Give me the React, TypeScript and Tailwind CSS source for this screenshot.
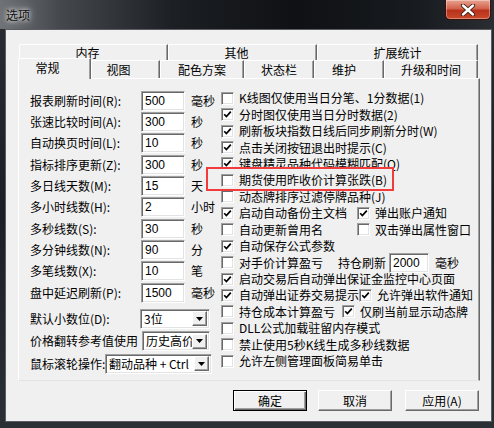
import React from "react"

const Box = ({ on }: { on?: boolean }) => (
  <span className="w-[13px] h-[13px] shrink-0 bg-white border border-t-[#a0a0a0] border-l-[#a0a0a0] border-r-white border-b-white shadow-[inset_1px_1px_0_#696969,inset_-1px_-1px_0_#e3e3e3] flex items-center justify-center">
    {on && (
      <svg width="9" height="9" viewBox="0 0 9 9">
        <path d="M1.2 4.2 L3.4 6.6 L7.8 1.6" fill="none" stroke="#000" strokeWidth="1.7" />
      </svg>
    )}
  </span>
)

const Check = ({ on, text, className = "" }: { on?: boolean; text: string; className?: string }) => (
  <div className={`flex items-center gap-[5px] whitespace-nowrap ${className}`}>
    <Box on={on} />
    <span>{text}</span>
  </div>
)

const Input = ({ value, className = "w-[44px]" }: { value: string; className?: string }) => (
  <div className={`h-[20px] shrink-0 bg-white border border-t-[#a0a0a0] border-l-[#a0a0a0] border-r-white border-b-white shadow-[inset_1px_1px_0_#696969,inset_-1px_-1px_0_#e3e3e3] pl-[3px] flex items-center font-['Liberation_Sans'] text-[12px] ${className}`}>
    {value}
  </div>
)

const Field = ({ label, value, unit }: { label: string; value: string; unit: string }) => (
  <div className="h-[21.33px] flex items-center">
    <span className="w-[111px] whitespace-nowrap">{label}</span>
    <Input value={value} />
    <span className="ml-[6px] whitespace-nowrap">{unit}</span>
  </div>
)

const Select = ({ value, className }: { value: string; className: string }) => (
  <div className={`h-[20px] shrink-0 bg-white border border-t-[#a0a0a0] border-l-[#a0a0a0] border-r-white border-b-white shadow-[inset_1px_1px_0_#696969,inset_-1px_-1px_0_#e3e3e3] flex items-center pl-[3px] pr-[2px] ${className}`}>
    <span className="flex-1 min-w-0 whitespace-nowrap overflow-x-clip">{value}</span>
    <span className="w-[15px] h-[15px] shrink-0 bg-[#f0f0f0] border border-t-white border-l-white border-r-[#696969] border-b-[#696969] shadow-[inset_-1px_-1px_0_#a0a0a0] flex items-center justify-center">
      <svg width="7" height="4" viewBox="0 0 7 4">
        <path d="M0 0 H7 L3.5 4 Z" fill="#000" />
      </svg>
    </span>
  </div>
)

const Button = ({ text, main, className = "" }: { text: string; main?: boolean; className?: string }) => (
  <div className={`w-[74px] h-[21px] bg-[#f0f0f0] flex items-center justify-center border ${main ? "border-black shadow-[inset_1px_1px_0_#fff,inset_-1px_-1px_0_#696969,inset_-2px_-2px_0_#a0a0a0]" : "border-t-white border-l-white border-r-[#696969] border-b-[#696969] shadow-[inset_-1px_-1px_0_#a0a0a0]"} ${className}`}>
    {text}
  </div>
)

const BackTab = ({ text, className }: { text: string; className: string }) => (
  <div className={`h-[16px] flex items-center justify-center border-t border-l border-t-white border-l-white border-r border-r-[#696969] shadow-[inset_-1px_0_0_#a0a0a0] rounded-tl-[2px] ${className}`}>
    {text}
  </div>
)

const FrontTab = ({ text, className, active }: { text: string; className: string; active?: boolean }) => (
  <div className={`flex items-center justify-center bg-[#f0f0f0] border-t border-l border-t-white border-l-white border-r border-r-[#696969] shadow-[inset_-1px_0_0_#a0a0a0] rounded-tl-[2px] ${active ? "h-[21px] pb-[3px]" : "h-[18px] mb-[1px] pt-[1px]"} ${className}`}>
    {text}
  </div>
)

export default function App() {
  return (
    <div className="w-[494px] h-[428px] overflow-hidden bg-[linear-gradient(180deg,#2a2e33_0%,#1b1f24_50%,#2b3035_100%)] font-['Noto_Sans_CJK_SC',sans-serif] text-[12px] leading-[16px] text-black">
      {/* title bar */}
      <div className="h-[29px] flex items-start justify-between bg-[linear-gradient(90deg,#6f7276_0%,#45484c_12%,#1c1f23_35%,#0f1114_60%,#181b1f_85%,#2a2d31_100%)]">
        <span className="mt-[7px] ml-[6px] text-[#111] [text-shadow:0_0_4px_#fff,0_0_8px_#ddd]">选项</span>
        <div className="mr-[3px] w-[46px] h-[20px] rounded-b-[5px] border border-t-0 border-[#3b0f0a] bg-[linear-gradient(180deg,#e8a393_0%,#d4624a_45%,#b8321c_55%,#c9482a_100%)] shadow-[inset_0_0_0_1px_rgba(255,255,255,0.35)] flex items-center justify-center">
          <svg width="16" height="12" viewBox="0 0 16 12">
            <path d="M3 1.5 L13 10.5 M13 1.5 L3 10.5" stroke="#3a1a12" strokeWidth="4.2" strokeLinecap="round" />
            <path d="M3 1.5 L13 10.5 M13 1.5 L3 10.5" stroke="#fff" strokeWidth="2.4" strokeLinecap="round" />
          </svg>
        </div>
      </div>

      {/* client area */}
      <div className="ml-[5px] w-[487px] h-[393px] border border-[#5a5e63] bg-[#f0f0f0] pl-[12px] pt-[14px]">
        {/* tabs */}
        <div className="flex ml-[1px] w-[459px]">
          <BackTab text="内存" className="w-[149px] pr-[12px]" />
          <BackTab text="其他" className="w-[149px] pr-[12px]" />
          <BackTab text="扩展统计" className="w-[161px]" />
        </div>
        <div className="relative z-10 -mt-[2px] -mb-[1px] h-[21px] flex items-end w-[460px]">
          <FrontTab text="常规" active className="w-[73px] pr-[14px]" />
          <FrontTab text="视图" className="w-[69px] pr-[14px]" />
          <FrontTab text="配色方案" className="w-[84px]" />
          <FrontTab text="状态栏" className="w-[70px]" />
          <FrontTab text="维护" className="w-[70px] pr-[10px]" />
          <FrontTab text="升级和时间" className="w-[94px]" />
        </div>

        {/* panel */}
        <div className="w-[462px] h-[303px] border border-t-white border-l-white border-r-[#696969] border-b-[#e3e3e3] shadow-[inset_-1px_0_0_#a0a0a0] flex pt-[11px] pl-[11px]">
          {/* left column */}
          <div className="w-[191px] flex flex-col">
            <Field label="报表刷新时间(R):" value="500" unit="毫秒" />
            <Field label="张速比较时间(A):" value="300" unit="秒" />
            <Field label="自动换页时间(L):" value="10" unit="秒" />
            <Field label="指标排序更新(Z):" value="300" unit="秒" />
            <Field label="多日线天数(M):" value="15" unit="天" />
            <Field label="多小时线数(H):" value="2" unit="小时" />
            <Field label="多秒线数(S):" value="30" unit="秒" />
            <Field label="多分钟线数(N):" value="90" unit="分" />
            <Field label="多笔线数(X):" value="10" unit="笔" />
            <Field label="盘中延迟刷新(P):" value="1500" unit="毫秒" />

            <div className="mt-[4px] h-[22.5px] flex items-center">
              <span className="w-[110px] whitespace-nowrap">默认小数位(D):</span>
              <Select value="3位" className="w-[70px]" />
            </div>
            <div className="h-[22.5px] flex items-center">
              <span className="w-[112px] whitespace-nowrap">价格翻转参考值使用</span>
              <Select value="历史高价" className="w-[68px]" />
            </div>
            <div className="h-[22.5px] flex items-center">
              <span className="w-[75px] shrink-0 whitespace-nowrap overflow-x-clip">鼠标滚轮操作:</span>
              <Select value="翻动品种 + Ctrl" className="w-[107px]" />
            </div>
          </div>

          {/* right column */}
          <div className="flex flex-col w-[258px]">
            <div className="h-[16.44px] flex items-center"><Check text="K线图仅使用当日分笔、1分数据(1)" /></div>
            <div className="h-[16.44px] flex items-center"><Check on text="分时图仅使用当日分时数据(2)" /></div>
            <div className="h-[16.44px] flex items-center"><Check on text="刷新板块指数日线后同步刷新分时(W)" /></div>
            <div className="h-[16.44px] flex items-center"><Check on text="点击关闭按钮退出时提示(C)" /></div>
            <div className="h-[16.44px] flex items-center"><Check on text="键盘精灵品种代码模糊匹配(Q)" /></div>
            <div className="relative z-10 h-[23.44px] w-[188px] -ml-[15px] pl-[13px] -mt-[5px] -mb-[2px] pt-[3px] bg-[#f0f0f0] border-2 border-[#f23b3b] flex items-center">
              <Check text="期货使用昨收价计算张跌(B)" />
            </div>
            <div className="h-[16.44px] flex items-center"><Check text="动态牌排序过滤停牌品种(J)" /></div>
            <div className="h-[16.44px] flex items-center">
              <Check on text="启动自动备份主文档" className="w-[136px]" />
              <Check on text="弹出账户通知" />
            </div>
            <div className="h-[16.44px] flex items-center">
              <Check text="自动更新曾用名" className="w-[136px]" />
              <Check text="双击弹出属性窗口" />
            </div>
            <div className="h-[16.44px] flex items-center"><Check on text="自动保存公式参数" /></div>
            <div className="h-[16.44px] flex items-center">
              <Check text="对手价计算盈亏" className="w-[117px]" />
              <span className="w-[51px] whitespace-nowrap">持仓刷新</span>
              <Input value="2000" className="w-[40px]" />
              <span className="ml-[6px]">毫秒</span>
            </div>
            <div className="h-[16.44px] flex items-center"><Check on text="启动交易后自动弹出保证金监控中心页面" /></div>
            <div className="h-[16.44px] flex items-center">
              <Check on text="自动弹出证券交易提示" className="w-[138px] shrink-0 overflow-x-clip" />
              <Check on text="允许弹出软件通知" />
            </div>
            <div className="h-[16.44px] flex items-center">
              <Check text="持仓成本计算盈亏" className="w-[121px]" />
              <Check on text="仅刷当前显示动态牌" />
            </div>
            <div className="h-[16.44px] flex items-center"><Check text="DLL公式加载驻留内存模式" /></div>
            <div className="h-[16.44px] flex items-center"><Check text="禁止使用5秒K线生成多秒线数据" /></div>
            <div className="h-[16.44px] flex items-center"><Check text="允许左侧管理面板简易单击" /></div>
          </div>
        </div>

        {/* buttons */}
        <div className="flex mt-[9px] pl-[215px]">
          <Button text="确定" main />
          <Button text="取消" className="ml-[11px]" />
          <Button text="应用(A)" className="ml-[13px]" />
        </div>
      </div>
    </div>
  )
}
